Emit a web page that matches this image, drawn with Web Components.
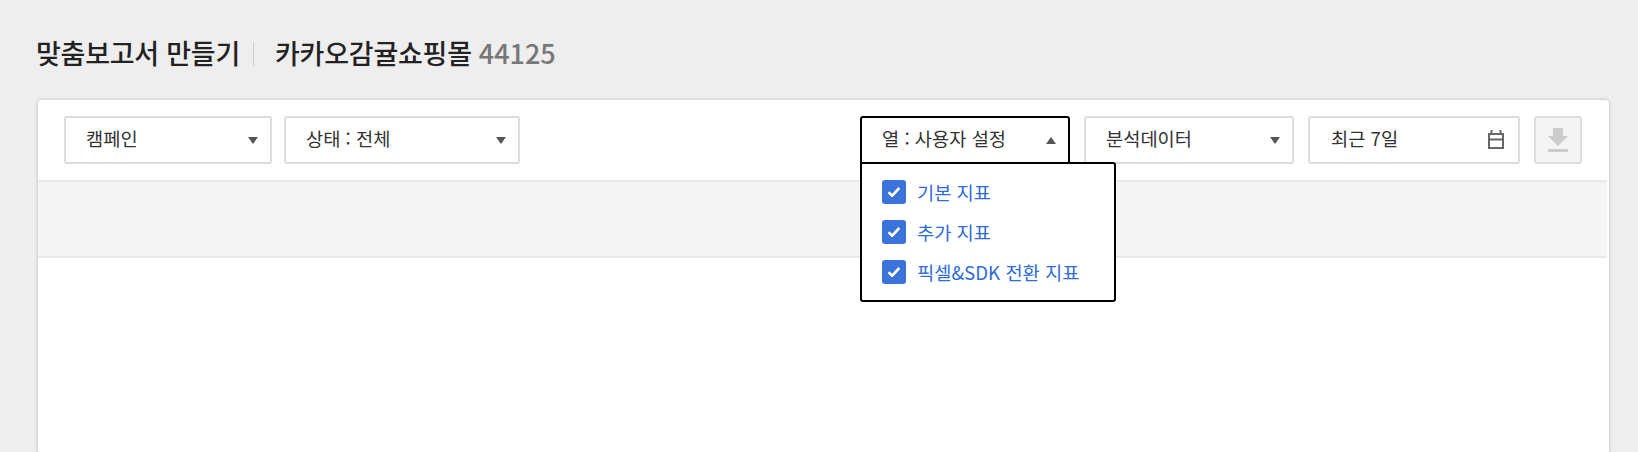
<!DOCTYPE html>
<html lang="ko">
<head>
<meta charset="utf-8">
<title>맞춤보고서 만들기</title>
<style>
  html, body { margin: 0; height: 100%; overflow: hidden; }
  body {
    background: #eee;
    font-family: "Noto Sans CJK KR", "Noto Sans", sans-serif;
    color: #333;
  }
</style>
</head>
<body>
<report-page>
  <report-title slot="title" name="맞춤보고서 만들기" account="카카오감귤쇼핑몰" code="44125"></report-title>
  <report-card slot="card">
    <select-box slot="left" style="width:208px" label="캠페인"></select-box>
    <select-box slot="left" style="width:236px" label="상태 : 전체"></select-box>
    <select-box slot="right" style="width:210px" label="열 : 사용자 설정" open>
      <check-item>기본 지표</check-item>
      <check-item>추가 지표</check-item>
      <check-item>픽셀&amp;SDK 전환 지표</check-item>
    </select-box>
    <select-box slot="right" style="width:210px" label="분석데이터"></select-box>
    <date-box slot="right" label="최근 7일"></date-box>
    <download-button slot="right"></download-button>
  </report-card>
</report-page>

<script>
class ReportPage extends HTMLElement {
  constructor() {
    super();
    this.attachShadow({ mode: "open" });
    this.shadowRoot.innerHTML = `
      <style>
        :host {
          display: flex;
          flex-direction: column;
          height: 452px;
          padding: 30px 29px 0 38px;
          box-sizing: border-box;
        }
      </style>
      <slot name="title"></slot>
      <slot name="card"></slot>
    `;
  }
}

class ReportTitle extends HTMLElement {
  constructor() {
    super();
    this.attachShadow({ mode: "open" });
  }

  connectedCallback() {
    this.shadowRoot.innerHTML = `
      <style>
        :host {
          display: flex;
          align-items: center;
          height: 44px;
          margin: 0 0 26px -2px;
          font-size: 27px;
          font-weight: 500;
          letter-spacing: -0.25px;
          color: #222;
          white-space: nowrap;
        }
        .bar {
          width: 1px;
          height: 24px;
          margin: 4px 21px 0 13px;
          background: #ccc;
        }
        .code {
          margin-left: 7px;
          color: #777;
          letter-spacing: 0;
        }
      </style>
      <span>${this.getAttribute("name")}</span>
      <span class="bar"></span>
      <span>${this.getAttribute("account")}</span>
      <span class="code">${this.getAttribute("code")}</span>
    `;
  }
}

class ReportCard extends HTMLElement {
  constructor() {
    super();
    this.attachShadow({ mode: "open" });
    this.shadowRoot.innerHTML = `
      <style>
        :host {
          display: block;
          flex: 1;
          background: #fff;
          border-radius: 4px 4px 0 0;
          box-shadow: 0 0 3px 1px rgba(0, 0, 0, 0.14);
        }
        .toolbar {
          display: flex;
          justify-content: space-between;
          padding: 16px 27px 16px 26px;
        }
        .group {
          display: flex;
          gap: 14px;
        }
        .group.left {
          gap: 12px;
        }
        .band {
          height: 74px;
          margin-right: 2px;
          background: #f4f4f4;
          border-top: 2px solid #e9e9e9;
          border-bottom: 2px solid #e9e9e9;
        }
      </style>
      <div class="toolbar">
        <div class="group left"><slot name="left"></slot></div>
        <div class="group"><slot name="right"></slot></div>
      </div>
      <div class="band"></div>
    `;
  }
}

class SelectBox extends HTMLElement {
  constructor() {
    super();
    this.attachShadow({ mode: "open" });
  }

  connectedCallback() {
    const open = this.hasAttribute("open");
    this.shadowRoot.innerHTML = `
      <style>
        :host {
          display: block;
          position: relative;
          height: 48px;
          font-size: 18.7px;
          color: #333;
        }
        .box {
          display: flex;
          align-items: center;
          justify-content: space-between;
          height: 100%;
          box-sizing: border-box;
          padding: 0 12px 5px 20px;
          background: #fff;
          border: 2px solid ${open ? "#000" : "#ddd"};
          border-radius: ${open ? "3px 3px 0 0" : "3px"};
        }
        .arrow {
          width: 0;
          height: 0;
          margin-top: 5px;
          border-left: 5.5px solid transparent;
          border-right: 5.5px solid transparent;
          ${open ? "border-bottom: 7px solid #555;" : "border-top: 7px solid #555;"}
        }
        .menu {
          position: absolute;
          z-index: 2;
          left: 0;
          top: 46px;
          width: 256px;
          box-sizing: border-box;
          padding: 8px 20px 8px;
          background: #fff;
          border: 2px solid #000;
          border-radius: 0 3px 3px 3px;
        }
      </style>
      <div class="box">
        <span>${this.getAttribute("label")}</span>
        <span class="arrow"></span>
      </div>
      ${open ? '<div class="menu"><slot></slot></div>' : ""}
    `;
  }
}

class CheckItem extends HTMLElement {
  constructor() {
    super();
    this.attachShadow({ mode: "open" });
    this.shadowRoot.innerHTML = `
      <style>
        :host {
          display: flex;
          align-items: center;
          gap: 11px;
          height: 40px;
          font-size: 18.7px;
          color: #2f6bd9;
          white-space: nowrap;
        }
        .check {
          display: flex;
          align-items: center;
          justify-content: center;
          width: 24px;
          height: 24px;
          background: #3a73dc;
          border-radius: 3px;
        }
        .text {
          padding-bottom: 2px;
        }
      </style>
      <span class="check">
        <svg width="14" height="12" viewBox="0 0 14 12" fill="none">
          <path d="M1.5 6.2 L5.2 9.6 L12.3 2" stroke="#fff" stroke-width="2.6"/>
        </svg>
      </span>
      <span class="text"><slot></slot></span>
    `;
  }
}

class DateBox extends HTMLElement {
  constructor() {
    super();
    this.attachShadow({ mode: "open" });
  }

  connectedCallback() {
    this.shadowRoot.innerHTML = `
      <style>
        :host {
          display: flex;
          align-items: center;
          justify-content: space-between;
          width: 212px;
          height: 48px;
          box-sizing: border-box;
          padding: 0 14px 0 21px;
          border: 2px solid #ddd;
          border-radius: 3px;
          font-size: 18.7px;
          color: #333;
        }
        span {
          padding-bottom: 5px;
        }
      </style>
      <span>${this.getAttribute("label")}</span>
      <svg width="16" height="20" viewBox="0 0 16 20" fill="none" stroke="#666" stroke-width="2">
        <path d="M1 4 H15 V18 H1 Z M1 9.5 H15 M3.5 0 V4 M12.5 0 V4"/>
      </svg>
    `;
  }
}

class DownloadButton extends HTMLElement {
  constructor() {
    super();
    this.attachShadow({ mode: "open" });
    this.shadowRoot.innerHTML = `
      <style>
        :host {
          display: flex;
          align-items: center;
          justify-content: center;
          width: 48px;
          height: 48px;
          box-sizing: border-box;
          background: #f4f4f4;
          border: 2px solid #ddd;
          border-radius: 3px;
        }
      </style>
      <svg width="22" height="26" viewBox="0 0 22 26" fill="#ccc">
        <path d="M6 1 H16 V9 H21 L11 19 L1 9 H6 Z"/>
        <rect x="1" y="22" width="20" height="3"/>
      </svg>
    `;
  }
}

customElements.define("report-page", ReportPage);
customElements.define("report-title", ReportTitle);
customElements.define("report-card", ReportCard);
customElements.define("select-box", SelectBox);
customElements.define("check-item", CheckItem);
customElements.define("date-box", DateBox);
customElements.define("download-button", DownloadButton);
</script>
</body>
</html>
